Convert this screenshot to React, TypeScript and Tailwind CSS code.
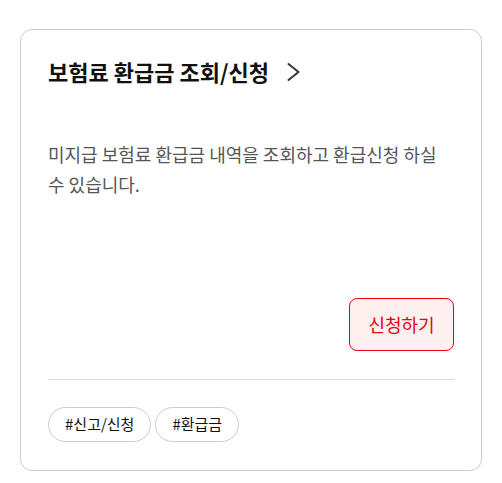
const tags = ['#신고/신청', '#환급금'];

export default function App() {
  return (
    <div className="min-h-screen bg-white px-5 pt-[29px] font-['Noto_Sans_CJK_KR','Noto_Sans',sans-serif]">
      <div className="w-[462px] h-[442px] rounded-xl border border-[#cccccc] px-[27px] pt-[26px] pb-7 flex flex-col">
        <a className="flex items-center gap-[18px] text-[22px] font-bold text-[#111111] leading-[30px]">
          보험료 환급금 조회/신청
          <svg width="13" height="18" viewBox="0 0 13 18" fill="none" className="mt-px">
            <polyline points="1.5,1 11.5,9 1.5,17" stroke="#333333" strokeWidth="2" strokeLinecap="round" strokeLinejoin="round" />
          </svg>
        </a>

        <p className="mt-[53px] text-[18px] leading-[30px] text-[#555555] break-keep">
          미지급 보험료 환급금 내역을 조회하고 환급신청 하실 수 있습니다.
        </p>

        <div className="mt-auto flex justify-end">
          <button
            type="button"
            className="h-[53px] w-[105px] rounded-lg border border-[#e60012] bg-[#fff0f0] text-[18px] text-[#e60012]"
          >
            신청하기
          </button>
        </div>

        <div className="mt-7 border-t border-[#dddddd]" />

        <div className="mt-[27px] flex gap-1">
          {tags.map(tag => (
            <span
              key={tag}
              className="h-[35px] px-4 flex items-center rounded-full border border-[#cccccc] text-[15px] text-[#111111]"
            >
              {tag}
            </span>
          ))}
        </div>
      </div>
    </div>
  );
}
